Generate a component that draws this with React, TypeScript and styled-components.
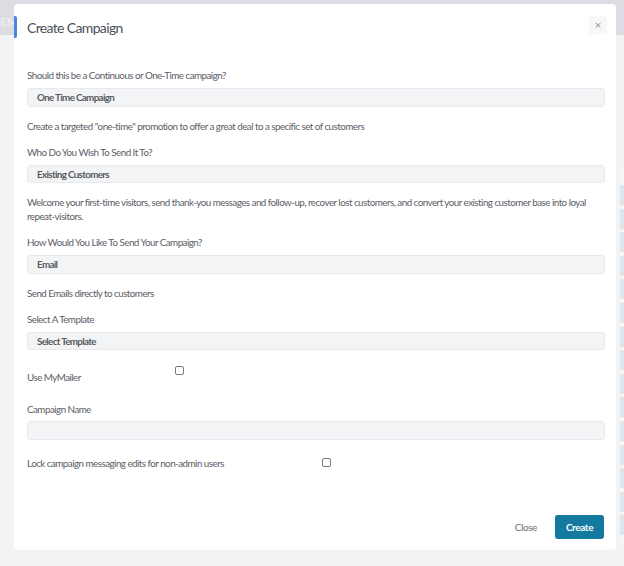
import styled, { createGlobalStyle } from 'styled-components';

const GlobalStyle = createGlobalStyle`
  html, body { margin: 0; padding: 0; }
  body {
    background: #f3f3f4;
    font-family: Lato, "Liberation Sans", sans-serif;
    height: 566px;
    overflow: hidden;
  }
`;

/* page behind the dialog */

const TopBar = styled.div`
  height: 35px;
  background: #dcdde2;
  color: #eceef3;
  font-size: 12px;
  font-weight: 700;
  line-height: 44px;
  overflow: hidden;
`;

const PageBody = styled.div`
  display: flex;
  justify-content: flex-end;
  padding-top: 135px;
`;

const Table = styled.div`
  width: 4px;
  padding: 15px 0 6px;
  display: flex;
  flex-direction: column;
  gap: 3.6px;
  background: #f4f6f8;
  border-bottom-left-radius: 4px;
`;

const TableRow = styled.div`
  height: 20px;
  background: #dde6ed;
`;

/* dialog */

const Modal = styled.div`
  position: fixed;
  top: 4px;
  left: 14px;
  width: 602px;
  height: 546px;
  background: #fff;
  border-radius: 4px;
  display: flex;
  flex-direction: column;
  box-sizing: border-box;
`;

const Header = styled.div`
  display: flex;
  align-items: center;
  height: 22px;
  margin-top: 12px;
`;

const AccentBar = styled.div`
  width: 3px;
  align-self: stretch;
  background: #4b84e6;
  border-radius: 0 2px 2px 0;
`;

const Title = styled.h2`
  margin: 0 0 0 10px;
  font-size: 14px;
  font-weight: 400;
  letter-spacing: -0.65px;
  color: #4a505b;
`;

const CloseButton = styled.button`
  margin: 0 9px 0 auto;
  align-self: flex-start;
  width: 18px;
  height: 18px;
  padding: 0;
  border: none;
  border-radius: 2px;
  background: #f6f7f7;
  color: #8a8d90;
  font-size: 9px;
  line-height: 18px;
  font-family: "DejaVu Sans", sans-serif;
`;

const Body = styled.div`
  padding: 30px 11px 0 13px;
  display: flex;
  flex-direction: column;
`;

const Group = styled.div<{ $gap?: number }>`
  display: flex;
  flex-direction: column;
  margin-top: ${({ $gap }) => $gap ?? 12}px;
`;

const Label = styled.div`
  font-size: 9.8px;
  line-height: 14px;
  letter-spacing: -0.52px;
  color: #5b6067;
`;

const Select = styled.div<{ $empty?: boolean; $offset?: number }>`
  margin-top: ${({ $offset }) => $offset ?? 6}px;
  height: 18.5px;
  box-sizing: border-box;
  border: 1px solid #e7e9ec;
  border-radius: 3px;
  background: ${({ $empty }) => ($empty ? '#f4f5f6' : '#f3f4f6')};
  padding-left: 9px;
  font-size: 9.8px;
  font-weight: 700;
  letter-spacing: -0.65px;
  line-height: 16.5px;
  color: #575b61;
`;

const Help = styled.div`
  margin-top: 12px;
  font-size: 9.8px;
  line-height: 14px;
  letter-spacing: -0.52px;
  color: #5b6067;
`;

const CheckRow = styled.div<{ $labelWidth: number; $center?: boolean; $gap: number }>`
  display: grid;
  grid-template-columns: ${({ $labelWidth }) => $labelWidth}px auto;
  align-items: ${({ $center }) => ($center ? 'center' : 'start')};
  margin-top: ${({ $gap }) => $gap}px;
`;

const CheckLabel = styled(Label)<{ $offset?: number }>`
  padding-top: ${({ $offset }) => $offset ?? 0}px;
`;

const Checkbox = styled.span`
  display: block;
  width: 9px;
  height: 9px;
  box-sizing: border-box;
  border: 1px solid #77797c;
  border-radius: 2px;
  background: #fff;
`;

const Footer = styled.div`
  margin-top: auto;
  display: flex;
  justify-content: flex-end;
  align-items: center;
  gap: 18px;
  padding: 0 12px 11px 0;
`;

const TextButton = styled.button`
  border: none;
  background: none;
  padding: 0;
  font-family: Lato, "Liberation Sans", sans-serif;
  font-size: 10px;
  letter-spacing: -0.4px;
  color: #6c7176;
`;

const PrimaryButton = styled.button`
  width: 49px;
  height: 24px;
  border: none;
  border-radius: 3px;
  background: #14799f;
  color: #fff;
  font-family: Lato, "Liberation Sans", sans-serif;
  font-size: 10px;
  font-weight: 700;
  letter-spacing: -0.4px;
`;

const rows = Array.from({ length: 15 });

export default function App() {
  return (
    <>
      <GlobalStyle />
      <TopBar>EM</TopBar>
      <PageBody>
        <Table>
          {rows.map((_, i) => (
            <TableRow key={i} />
          ))}
        </Table>
      </PageBody>

      <Modal>
        <Header>
          <AccentBar />
          <Title>Create Campaign</Title>
          <CloseButton aria-label="Close">×</CloseButton>
        </Header>

        <Body>
          <Group $gap={0}>
            <Label>Should this be a Continuous or One-Time campaign?</Label>
            <Select>One Time Campaign</Select>
            <Help>Create a targeted "one-time" promotion to offer a great deal to a specific set of customers</Help>
          </Group>
          <Group>
            <Label>Who Do You Wish To Send It To?</Label>
            <Select>Existing Customers</Select>
            <Help>
              Welcome your first-time visitors, send thank-you messages and follow-up, recover lost customers, and
              convert your existing customer base into loyal repeat-visitors.
            </Help>
          </Group>
          <Group>
            <Label>How Would You Like To Send Your Campaign?</Label>
            <Select>Email</Select>
            <Help>Send Emails directly to customers</Help>
          </Group>
          <Group>
            <Label>Select A Template</Label>
            <Select>Select Template</Select>
          </Group>

          <CheckRow $labelWidth={148} $gap={16}>
            <CheckLabel $offset={4}>Use MyMailer</CheckLabel>
            <Checkbox />
          </CheckRow>

          <Group $gap={18}>
            <Label>Campaign Name</Label>
            <Select $empty $offset={5} />
          </Group>

          <CheckRow $labelWidth={295} $center $gap={16}>
            <CheckLabel>Lock campaign messaging edits for non-admin users</CheckLabel>
            <Checkbox />
          </CheckRow>
        </Body>

        <Footer>
          <TextButton>Close</TextButton>
          <PrimaryButton>Create</PrimaryButton>
        </Footer>
      </Modal>
    </>
  );
}
